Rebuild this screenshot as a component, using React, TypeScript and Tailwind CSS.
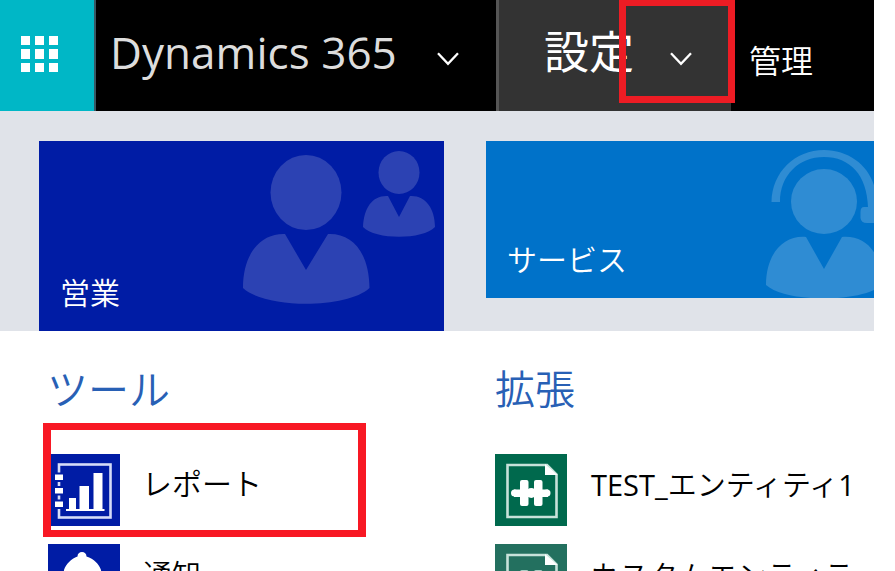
import type { ReactNode } from 'react';

const jp = "font-['Noto_Sans_CJK_JP',sans-serif] whitespace-nowrap font-[350]";

function Chevron() {
  return (
    <svg className="block h-[14px] w-[22px] shrink-0" viewBox="0 0 22 14" fill="none" stroke="#fff" strokeWidth="2.3">
      <path d="M1 1.2 11 11.8 21 1.2" />
    </svg>
  );
}

function ReportIcon() {
  return (
    <svg className="block h-[72px] w-[72px] shrink-0 bg-[#001ca5]" viewBox="0 0 72 72">
      <rect x="11" y="10.5" width="51.5" height="53" fill="none" stroke="#d5dcf8" strokeWidth="2.6" />
      <g fill="#fff" stroke="#001ca5" strokeWidth="2">
        <rect x="6" y="19.5" width="10" height="7.5" />
        <rect x="6" y="33" width="10" height="7.5" />
        <rect x="6" y="46.5" width="10" height="7.5" />
      </g>
      <path fill="#fff" d="M21 44h7v11h3.500V32H41V55h4.500V19h9v36h2v2H18v-2h3z" />
    </svg>
  );
}

function BellIcon() {
  return (
    <svg className="block h-[72px] w-[72px] shrink-0 bg-[#001ca5]" viewBox="0 0 72 72">
      <path fill="#fff" d="M34 8C36.500 8 38.500 9.500 38.500 12.500C46 15 51 20 53 26L55 48L60 55H9L14 48L16 26C18 20 23 15 29.500 12.500C29.500 9.500 31.500 8 34 8z" />
    </svg>
  );
}

function EntityIcon({ custom = false }: { custom?: boolean }) {
  return (
    <svg className={`block h-[72px] w-[72px] shrink-0 ${custom ? 'bg-[#23705f]' : 'bg-[#00694d]'}`} viewBox="0 0 72 72">
      <path d="M12.500 11H52L61.500 20.500V63H12.500z" fill="none" stroke="#c7e2da" strokeWidth="2.6" />
      <path d="M50 10 62.500 21H50z" fill="#fff" />
      <g fill={custom ? '#a9cfc5' : '#fff'}>
        <rect x="25" y="26" width="8.500" height="26" rx="2" />
        <rect x="39" y="26" width="8.500" height="26" rx="2" />
        <path d="M19 35.500H53V43H19z" />
        <circle cx="19.500" cy="39" r="3.500" />
        <circle cx="36.300" cy="39" r="5" />
        <circle cx="52" cy="39" r="3.500" />
      </g>
    </svg>
  );
}

function SalesArt() {
  return (
    <svg className="absolute top-0 left-0 h-[190px] w-[405px]" viewBox="0 0 405 190" fill="#2c42b3">
      <ellipse cx="267" cy="51.500" rx="35.500" ry="37.500" />
      <path d="M246 93 267 129 289 93C314 92 330 112 330.500 147C308 168 226 168 204 147C204 112 222 92 246 93z" />
      <ellipse cx="360" cy="31.500" rx="20.500" ry="21.500" />
      <path d="M349 55 360 76 371 55C386 54 396 67 396 86C384 99 336 99 324 86C325 66 334 54 349 55z" />
    </svg>
  );
}

function ServiceArt() {
  return (
    <svg className="absolute top-0 left-0 h-[157px] w-[388px]" viewBox="0 0 388 157" fill="#2f8cd3">
      <path d="M285.500 61H294C294 34 313 16 338 16C364 16 381 34 382 66H378Q374.500 66 374.500 71V77Q375 82 381 82H390V55C388 28 365 9 338 9C309 9 286 31 285.500 61z" />
      <ellipse cx="338" cy="60.500" rx="33" ry="32.500" />
      <path d="M320 96 338 128 356 96C380 94 396 112 396 144C376 162 300 162 280 144C280 112 298 94 320 96z" />
    </svg>
  );
}

function Entry({ icon, children }: { icon: ReactNode; children: ReactNode }) {
  return (
    <div className="flex h-[72px] items-center gap-6">
      {icon}
      {children}
    </div>
  );
}

export default function App() {
  return (
    <div className="relative h-[571px] w-[895px] overflow-hidden bg-white">
      <header className="flex h-[111px] w-[874px] bg-black text-white">
        <div className="w-[96px] border-r-2 border-[#3a5864] bg-[#00b7c6] pt-9 pl-[21px]">
          <div className="grid w-[37px] grid-cols-3 gap-x-[4.500px] gap-y-1">
            {Array.from({ length: 9 }, (_, i) => (
              <span key={i} className="h-[9.300px] bg-white" />
            ))}
          </div>
        </div>
        <div className="flex w-[400px] pl-[14px]">
          <span className="w-[327px] pt-[22px] font-['Open_Sans',sans-serif] text-[44px] leading-[60px] font-normal tracking-[0.05px] whitespace-nowrap text-[#ddd]">Dynamics 365</span>
          <div className="pt-[52px]"><Chevron /></div>
        </div>
        <div className="flex w-[235px] border-l-[3px] border-[#555] bg-[#333] pl-[45px]">
          <span className="w-[126px] pt-[20px] font-['Noto_Sans_CJK_JP',sans-serif] text-[45px] leading-[60px] whitespace-nowrap">設定</span>
          <div className="pt-[52px]"><Chevron /></div>
        </div>
        <span className={`${jp} pt-[38px] pl-[18px] text-[32px] leading-[42px]`}>管理</span>
      </header>

      <section className="flex h-[220px] w-[874px] items-start bg-[#e0e3e9] pt-[30px] pl-[39px] text-white">
        <div className="relative h-[190px] w-[405px] bg-[#001ca5] pt-[130px] pl-[21px]">
          <SalesArt />
          <span className={`${jp} relative block text-[30px] leading-[40px]`}>営業</span>
        </div>
        <div className="relative ml-[42px] h-[157px] w-[388px] overflow-hidden bg-[#0072c9] pt-[97px] pl-[21px]">
          <ServiceArt />
          <span className={`${jp} relative block text-[30px] leading-[40px]`}>サービス</span>
        </div>
      </section>

      <main className="flex pt-[30px] pl-12">
        <section className="w-[447px]">
          <h2 className={`${jp} -ml-px h-[57px] text-[41px] leading-[52px] text-[#2860b5]`}>ツール</h2>
          <div className="mt-9 flex flex-col gap-[18px]">
            <Entry icon={<ReportIcon />}>
              <span className={`${jp} -ml-[2px] pb-[17px] text-[30px] leading-[40px] text-black`}>レポート</span>
            </Entry>
            <Entry icon={<BellIcon />}>
              <span className={`${jp} -ml-px pb-[15px] text-[29px] leading-[40px] text-black`}>通知</span>
            </Entry>
          </div>
        </section>
        <section className="w-[379px]">
          <h2 className={`${jp} h-[57px] text-[40px] leading-[52px] text-[#2860b5]`}>拡張</h2>
          <div className="mt-9 flex flex-col gap-[18px]">
            <Entry icon={<EntityIcon />}>
              <span className="pb-[13px] font-['Open_Sans','Noto_Sans_CJK_JP',sans-serif] text-[29px] leading-[40px] whitespace-nowrap text-black">TEST_<span className={jp}>エンティティ</span>1</span>
            </Entry>
            <Entry icon={<EntityIcon custom />}>
              <span className={`${jp} -ml-px pb-3 text-[29px] leading-[40px] tracking-[0.5px] text-black`}>カスタムエンティテ</span>
            </Entry>
          </div>
        </section>
      </main>

      <div className="absolute top-[-1px] left-[619px] h-[104px] w-[116px] border-[7.500px] border-[#ed1c24]" />
      <div className="absolute top-[423px] left-[43px] h-[114px] w-[323px] border-x-8 border-y-7 border-[#f81824]" />
    </div>
  );
}
